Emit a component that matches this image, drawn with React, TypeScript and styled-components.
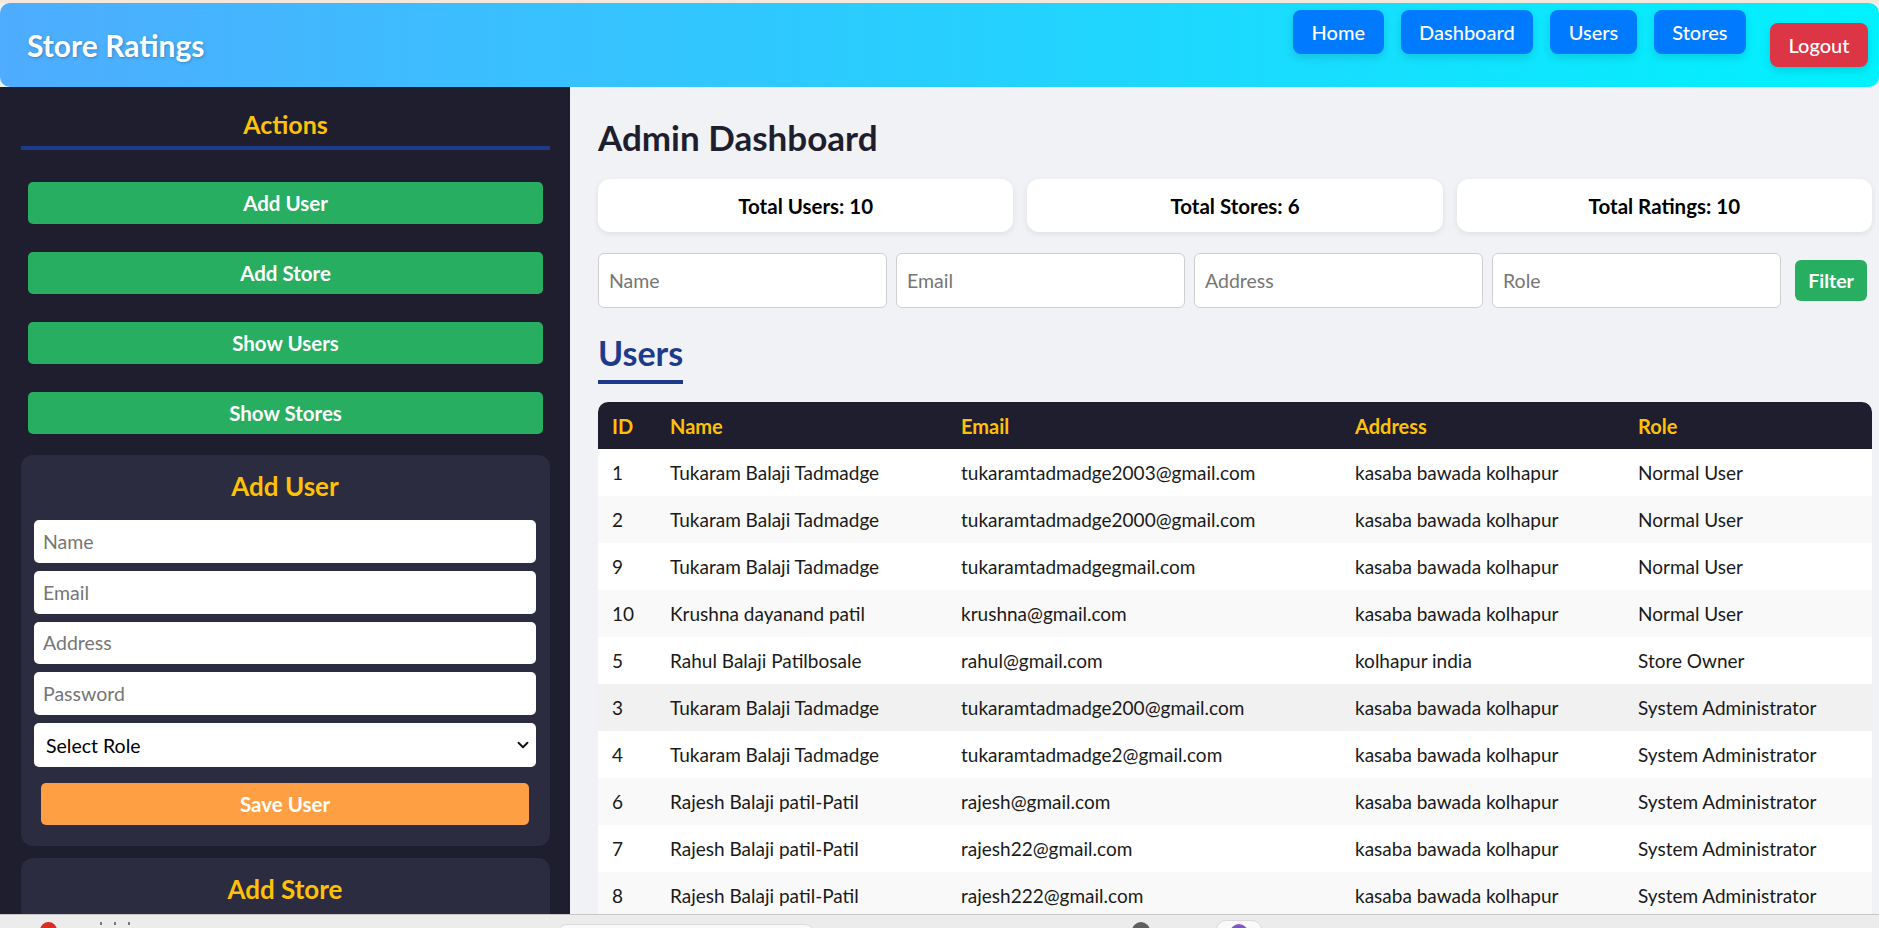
import React from "react";
import styled, { createGlobalStyle } from "styled-components";
import { ChevronDown } from "lucide-react";

const GlobalStyle = createGlobalStyle`
  html, body { margin: 0; padding: 0; }
  body { font-family: Lato, "Open Sans", sans-serif; background: #f0f2f5; overflow: hidden; }
  * { box-sizing: border-box; }
  input::placeholder { color: #767676; }
`;

const Page = styled.div`
  width: 1879px;
  height: 928px;
  display: flex;
  flex-direction: column;
  overflow: hidden;
  background: #f0f2f5;
`;

const TopStrip = styled.div`
  height: 3px;
  flex: none;
  background: #f4e8dc;
`;

const Header = styled.header`
  flex: none;
  height: 84px;
  display: flex;
  align-items: center;
  justify-content: space-between;
  padding: 0 11px 0 27px;
  border-radius: 10px;
  background: linear-gradient(to right, #4facfe, #00f2fe);
`;

const Brand = styled.h1`
  margin: 0;
  color: #fff;
  font-size: 30px;
  font-weight: 700;
  text-shadow: 1px 1px 3px rgba(0, 0, 0, 0.25);
`;

const Nav = styled.nav`
  display: flex;
  align-items: center;
  gap: 24px;
`;

const NavLinks = styled.div`
  display: flex;
  gap: 17px;
  margin-bottom: 26px;
`;

const NavButton = styled.button<{ $danger?: boolean }>`
  height: 44px;
  padding: 0 18.5px;
  border: none;
  border-radius: 8px;
  background: ${(p) => (p.$danger ? "#dc3545" : "#007bff")};
  color: #fff;
  font-family: inherit;
  font-size: 20px;
  font-weight: 500;
  box-shadow: 0 4px 8px rgba(0, 0, 0, 0.12);
  cursor: pointer;
`;

const Body = styled.div`
  flex: 1;
  min-height: 0;
  display: flex;
`;

const Sidebar = styled.aside`
  flex: none;
  width: 570px;
  background: #1e1e2f;
  padding: 0 20px 0 21px;
  overflow: hidden;
  display: flex;
  flex-direction: column;
`;

const SideHeading = styled.h3`
  margin: 22px 0 0;
  padding-bottom: 6px;
  border-bottom: 4px solid #1e3a8a;
  color: #ffc107;
  font-size: 25px;
  line-height: 31px;
  font-weight: 700;
  text-align: center;
`;

const ActionList = styled.div`
  display: flex;
  flex-direction: column;
  gap: 28px;
  margin-top: 32px;
`;

const ActionButton = styled.button`
  height: 42px;
  margin: 0 7px;
  border: none;
  border-radius: 5px;
  background: #27ae60;
  color: #fff;
  font-family: inherit;
  font-size: 20.5px;
  font-weight: 700;
`;

const FormCard = styled.section<{ $gap: number }>`
  flex: none;
  margin-top: ${(p) => p.$gap}px;
  background: #2c2c40;
  border-radius: 12px;
  padding: 16px 14px 21px 13px;
  display: flex;
  flex-direction: column;
  gap: 8px;
`;

const CardTitle = styled.h3`
  margin: 0 0 10px;
  color: #ffc107;
  font-size: 26px;
  line-height: 31px;
  font-weight: 700;
  text-align: center;
`;

const Field = styled.input`
  height: 42.75px;
  border: none;
  border-radius: 5px;
  padding: 0 9px;
  background: #fff;
  font-family: inherit;
  font-size: 19.5px;
  color: #222;
  outline: none;
`;

const SelectWrap = styled.div`
  position: relative;
  height: 44px;
`;

const Select = styled.select`
  width: 100%;
  height: 44px;
  border: none;
  border-radius: 5px;
  padding: 0 12px;
  background: #fff;
  font-family: inherit;
  font-size: 19.5px;
  color: #000;
  appearance: none;
  outline: none;
`;

const SelectChevron = styled(ChevronDown)`
  position: absolute;
  right: 4px;
  top: 13px;
  pointer-events: none;
`;

const SaveButton = styled.button`
  height: 42px;
  margin: 8px 7px 0;
  border: none;
  border-radius: 5px;
  background: #ff9f43;
  color: #fff;
  font-family: inherit;
  font-size: 20.5px;
  font-weight: 700;
`;

const Main = styled.main`
  flex: 1;
  min-width: 0;
  padding: 0 7px 0 28px;
  overflow: hidden;
  background: #f0f2f5;
`;

const PageTitle = styled.h1`
  margin: 29px 0 0;
  font-size: 35px;
  line-height: 42px;
  font-weight: 700;
  color: #1e1e2f;
`;

const StatsGrid = styled.div`
  display: grid;
  grid-template-columns: repeat(3, 1fr);
  gap: 14px;
  margin-top: 21px;
`;

const StatCard = styled.div`
  height: 53px;
  display: flex;
  align-items: center;
  justify-content: center;
  background: #fff;
  border-radius: 12px;
  box-shadow: 0 2px 6px rgba(0, 0, 0, 0.08);
  font-size: 20.5px;
  font-weight: 700;
  color: #000;
`;

const FilterRow = styled.div`
  display: flex;
  align-items: center;
  gap: 9.5px;
  margin-top: 21px;
  padding-right: 5px;
`;

const FilterInput = styled.input`
  flex: 1;
  min-width: 0;
  height: 55px;
  border: 1px solid #cfcfcf;
  border-radius: 6px;
  padding: 0 10px;
  background: #fff;
  font-family: inherit;
  font-size: 19.5px;
  outline: none;
`;

const FilterButton = styled.button`
  flex: none;
  width: 72px;
  height: 41px;
  margin-left: 5px;
  border: none;
  border-radius: 6px;
  background: #27ae60;
  color: #fff;
  font-family: inherit;
  font-size: 19.5px;
  font-weight: 700;
`;

const SectionTitle = styled.h2`
  display: inline-block;
  margin: 24px 0 0;
  padding-bottom: 6px;
  border-bottom: 4px solid #1e3a8a;
  color: #1e3a8a;
  font-size: 34px;
  line-height: 42px;
  font-weight: 700;
`;

const TableWrap = styled.div`
  margin-top: 18px;
  border-radius: 10px 10px 0 0;
  overflow: hidden;
  background: #fff;
`;

const Table = styled.table`
  width: 100%;
  border-collapse: collapse;
  table-layout: fixed;
`;

const HeadCell = styled.th`
  height: 47px;
  padding: 0 14px;
  background: #1e1e2f;
  color: #ffc107;
  font-size: 20px;
  font-weight: 700;
  text-align: left;
`;

const Row = styled.tr<{ $tone: "white" | "alt" | "hover" }>`
  background: ${(p) =>
    p.$tone === "hover" ? "#f1f1f1" : p.$tone === "alt" ? "#f9f9f9" : "#ffffff"};
`;

const Cell = styled.td`
  height: 47px;
  padding: 0 14px;
  font-size: 19px;
  color: #1a1a1a;
  white-space: nowrap;
`;

const BottomBar = styled.div`
  flex: none;
  height: 14px;
  display: flex;
  align-items: flex-start;
  border-top: 1px solid #c8c8c8;
  background: #ececec;
  overflow: hidden;
`;

const Dot = styled.span<{ $color: string; $left: number; $top: number; $size: number }>`
  flex: none;
  width: ${(p) => p.$size}px;
  height: ${(p) => p.$size}px;
  margin-left: ${(p) => p.$left}px;
  margin-top: ${(p) => p.$top}px;
  border-radius: 50%;
  background: ${(p) => p.$color};
`;

const Marks = styled.span<{ $left: number }>`
  flex: none;
  margin-left: ${(p) => p.$left}px;
  margin-top: 7px;
  width: 40px;
  height: 3px;
  background: repeating-linear-gradient(to right, #777 0 2px, transparent 2px 14px);
`;

const TabShape = styled.span<{ $left: number; $width: number; $top: number }>`
  flex: none;
  display: flex;
  justify-content: center;
  margin-left: ${(p) => p.$left}px;
  margin-top: ${(p) => p.$top}px;
  width: ${(p) => p.$width}px;
  height: 20px;
  border: 1px solid #dadada;
  border-radius: 10px 10px 0 0;
  background: #fafafa;
`;

const users = [
  ["1", "Tukaram Balaji Tadmadge", "tukaramtadmadge2003@gmail.com", "kasaba bawada kolhapur", "Normal User"],
  ["2", "Tukaram Balaji Tadmadge", "tukaramtadmadge2000@gmail.com", "kasaba bawada kolhapur", "Normal User"],
  ["9", "Tukaram Balaji Tadmadge", "tukaramtadmadgegmail.com", "kasaba bawada kolhapur", "Normal User"],
  ["10", "Krushna dayanand patil", "krushna@gmail.com", "kasaba bawada kolhapur", "Normal User"],
  ["5", "Rahul Balaji Patilbosale", "rahul@gmail.com", "kolhapur india", "Store Owner"],
  ["3", "Tukaram Balaji Tadmadge", "tukaramtadmadge200@gmail.com", "kasaba bawada kolhapur", "System Administrator"],
  ["4", "Tukaram Balaji Tadmadge", "tukaramtadmadge2@gmail.com", "kasaba bawada kolhapur", "System Administrator"],
  ["6", "Rajesh Balaji patil-Patil", "rajesh@gmail.com", "kasaba bawada kolhapur", "System Administrator"],
  ["7", "Rajesh Balaji patil-Patil", "rajesh22@gmail.com", "kasaba bawada kolhapur", "System Administrator"],
  ["8", "Rajesh Balaji patil-Patil", "rajesh222@gmail.com", "kasaba bawada kolhapur", "System Administrator"],
];

const colWidths = [58, 291, 394, 283, 248];

export default function App() {
  return (
    <Page>
      <GlobalStyle />
      <TopStrip />
      <Header>
        <Brand>Store Ratings</Brand>
        <Nav>
          <NavLinks>
            <NavButton>Home</NavButton>
            <NavButton>Dashboard</NavButton>
            <NavButton>Users</NavButton>
            <NavButton>Stores</NavButton>
          </NavLinks>
          <NavButton $danger>Logout</NavButton>
        </Nav>
      </Header>
      <Body>
        <Sidebar>
          <SideHeading>Actions</SideHeading>
          <ActionList>
            <ActionButton>Add User</ActionButton>
            <ActionButton>Add Store</ActionButton>
            <ActionButton>Show Users</ActionButton>
            <ActionButton>Show Stores</ActionButton>
          </ActionList>
          <FormCard $gap={21}>
            <CardTitle>Add User</CardTitle>
            <Field placeholder="Name" />
            <Field placeholder="Email" />
            <Field placeholder="Address" />
            <Field placeholder="Password" />
            <SelectWrap>
              <Select defaultValue="">
                <option value="">Select Role</option>
                <option value="user">Normal User</option>
                <option value="owner">Store Owner</option>
                <option value="admin">System Administrator</option>
              </Select>
              <SelectChevron size={18} strokeWidth={2.5} color="#111" />
            </SelectWrap>
            <SaveButton>Save User</SaveButton>
          </FormCard>
          <FormCard $gap={12}>
            <CardTitle>Add Store</CardTitle>
            <Field placeholder="Store Name" />
            <Field placeholder="Email" />
            <Field placeholder="Address" />
          </FormCard>
        </Sidebar>
        <Main>
          <PageTitle>Admin Dashboard</PageTitle>
          <StatsGrid>
            <StatCard>Total Users: 10</StatCard>
            <StatCard>Total Stores: 6</StatCard>
            <StatCard>Total Ratings: 10</StatCard>
          </StatsGrid>
          <FilterRow>
            <FilterInput placeholder="Name" />
            <FilterInput placeholder="Email" />
            <FilterInput placeholder="Address" />
            <FilterInput placeholder="Role" />
            <FilterButton>Filter</FilterButton>
          </FilterRow>
          <SectionTitle>Users</SectionTitle>
          <TableWrap>
            <Table>
              <colgroup>
                {colWidths.map((w, i) => (
                  <col key={i} style={{ width: w }} />
                ))}
              </colgroup>
              <thead>
                <tr>
                  <HeadCell>ID</HeadCell>
                  <HeadCell>Name</HeadCell>
                  <HeadCell>Email</HeadCell>
                  <HeadCell>Address</HeadCell>
                  <HeadCell>Role</HeadCell>
                </tr>
              </thead>
              <tbody>
                {users.map((u, i) => (
                  <Row key={u[0]} $tone={i === 5 ? "hover" : i % 2 === 1 ? "alt" : "white"}>
                    {u.map((c, j) => (
                      <Cell key={j}>{c}</Cell>
                    ))}
                  </Row>
                ))}
              </tbody>
            </Table>
          </TableWrap>
        </Main>
      </Body>
      <BottomBar>
        <Dot $color="#d93025" $left={40} $top={7} $size={17} />
        <Marks $left={43} />
        <TabShape $left={417} $width={258} $top={9} />
        <Dot $color="#5f5f5f" $left={317} $top={7} $size={18} />
        <TabShape $left={66} $width={46} $top={5}>
          <Dot $color="#7e57c2" $left={0} $top={3} $size={18} />
        </TabShape>
      </BottomBar>
    </Page>
  );
}
